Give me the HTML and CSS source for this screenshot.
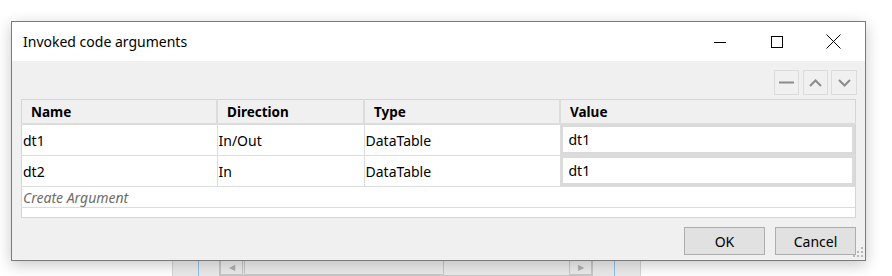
FILE: index.html
```html
<!DOCTYPE html>
<html lang="en">
<head>
    <meta charset="UTF-8">
    <title>Invoked code arguments</title>
    <link rel="stylesheet" href="styles.css">
</head>
<body>
    <!-- Designer panel behind the dialog -->
    <div class="backdrop">
        <div class="backdrop-scroll">
            <span class="arrow-box left">&#9664;</span>
            <span class="thumb"></span>
            <span class="arrow-box right">&#9654;</span>
        </div>
    </div>

    <!-- Dialog window -->
    <div class="dialog">
        <div class="title-bar">
            <span class="title">Invoked code arguments</span>
            <div class="window-buttons">
                <span class="win-btn">
                    <svg width="12" height="12" viewBox="0 0 12 12"><path d="M0 6.5h12" stroke="#000" stroke-width="1"/></svg>
                </span>
                <span class="win-btn">
                    <svg width="12" height="12" viewBox="0 0 12 12"><rect x="0.5" y="0.5" width="11" height="11" fill="none" stroke="#000" stroke-width="1"/></svg>
                </span>
                <span class="win-btn">
                    <svg width="15" height="15" viewBox="0 0 15 15"><path d="M0.5 0.5l14 14M14.5 0.5l-14 14" stroke="#000" stroke-width="1"/></svg>
                </span>
            </div>
        </div>

        <div class="content">
            <div class="toolbar">
                <span class="tool-btn">
                    <svg width="15" height="3" viewBox="0 0 15 3"><path d="M0 1.5h15" stroke="#8c8c8c" stroke-width="2"/></svg>
                </span>
                <span class="tool-btn">
                    <svg width="13" height="8" viewBox="0 0 13 8"><path d="M1 7l5.5-5.5L12 7" fill="none" stroke="#8c8c8c" stroke-width="2"/></svg>
                </span>
                <span class="tool-btn">
                    <svg width="13" height="8" viewBox="0 0 13 8"><path d="M1 1l5.5 5.5L12 1" fill="none" stroke="#8c8c8c" stroke-width="2"/></svg>
                </span>
            </div>

            <table class="args">
                <thead>
                    <tr>
                        <th class="col-name">Name</th>
                        <th class="col-dir">Direction</th>
                        <th class="col-type">Type</th>
                        <th>Value</th>
                    </tr>
                </thead>
                <tbody id="argRows"></tbody>
                <tfoot>
                    <tr class="create-row">
                        <td colspan="4">Create Argument</td>
                    </tr>
                    <tr class="empty-row">
                        <td colspan="4"></td>
                    </tr>
                </tfoot>
            </table>

            <div class="footer">
                <button class="btn">OK</button>
                <button class="btn">Cancel</button>
            </div>
        </div>

        <svg class="grip" width="10" height="10" viewBox="0 0 10 10">
            <rect x="8" y="0" width="2" height="2" fill="#b8b8b8"/>
            <rect x="4" y="4" width="2" height="2" fill="#b8b8b8"/>
            <rect x="8" y="4" width="2" height="2" fill="#b8b8b8"/>
            <rect x="0" y="8" width="2" height="2" fill="#b8b8b8"/>
            <rect x="4" y="8" width="2" height="2" fill="#b8b8b8"/>
            <rect x="8" y="8" width="2" height="2" fill="#b8b8b8"/>
        </svg>
    </div>

    <script>
        // Arguments passed to the invoked code
        const argsData = [
            { name: "dt1", direction: "In/Out", type: "DataTable", value: "dt1" },
            { name: "dt2", direction: "In", type: "DataTable", value: "dt1" }
        ];

        const argRows = document.getElementById('argRows');
        argsData.forEach(arg => {
            const row = document.createElement('tr');
            row.innerHTML = `
                <td>${arg.name}</td>
                <td>${arg.direction}</td>
                <td>${arg.type}</td>
                <td class="value-cell"><div class="value-box">${arg.value}</div></td>
            `;
            argRows.appendChild(row);
        });
    </script>
</body>
</html>
```

FILE: styles.css
```css
body {
    margin: 0;
    background: #fff;
    font-family: 'Noto Sans', 'Open Sans', sans-serif;
    font-size: 14px;
    color: #000;
    width: 892px;
    height: 276px;
    overflow: hidden;
    position: relative;
}

/* Panel of the designer seen under the dialog */
.backdrop {
    position: absolute;
    left: 172px;
    top: 250px;
    width: 467px;
    height: 30px;
    background: linear-gradient(#fafafa, #e6e6e6);
    border-left: 1px solid #d6d6d6;
    border-right: 1px solid #d6d6d6;
}

.backdrop::before,
.backdrop::after {
    content: "";
    position: absolute;
    top: 0;
    bottom: 0;
    width: 1px;
    background: #8fc1e8;
}

.backdrop::before {
    left: 25px;
}

.backdrop::after {
    left: 441px;
}

.backdrop-scroll {
    position: absolute;
    left: 46px;
    top: 0;
    width: 372px;
    height: 24px;
    border: 1px solid #c8c8c8;
    display: flex;
    font-size: 8px;
    color: #b0b0b0;
}

.arrow-box {
    width: 21px;
    border: 1px solid #c8c8c8;
    display: flex;
    align-items: flex-end;
    justify-content: center;
    padding-bottom: 2px;
}

.thumb {
    width: 198px;
    border: 1px solid #c8c8c8;
    margin-left: 1px;
}

.arrow-box.right {
    margin-left: auto;
}

/* Dialog */
.dialog {
    position: absolute;
    left: 11px;
    top: 21px;
    width: 853px;
    height: 238px;
    border: 1px solid #7a7a7a;
    background: #f0f0f0;
    box-shadow: 0 4px 14px rgba(0, 0, 0, 0.22);
}

.title-bar {
    height: 39px;
    background: #fff;
    display: flex;
    align-items: center;
}

.title {
    padding-left: 11px;
    font-size: 14px;
    color: #000;
}

.window-buttons {
    margin-left: auto;
    display: flex;
    margin-right: 3px;
}

.win-btn {
    width: 57px;
    height: 39px;
    display: flex;
    align-items: center;
    justify-content: center;
}

.content {
    padding: 9px 9px 0 9px;
}

.toolbar {
    display: flex;
    justify-content: flex-end;
    gap: 4px;
    margin-right: -1px;
    margin-bottom: 4px;
}

.tool-btn {
    width: 23px;
    height: 23px;
    border: 1px solid #dcdcdc;
    background: #f0f0f0;
    display: flex;
    align-items: center;
    justify-content: center;
}

.tool-btn:last-child {
    width: 24px;
    margin-left: -1px;
}

.args {
    width: 835px;
    border-collapse: collapse;
    table-layout: fixed;
    background: #fff;
    border: 1px solid #d5d5d5;
}

.args th {
    background: #f0f0f0;
    font-size: 13.5px;
    font-weight: 700;
    text-align: left;
    height: 23px;
    padding: 0 0 0 9px;
    border-left: 2px solid #dcdcdc;
    border-bottom: 2px solid #dcdcdc;
}

.args th:first-child {
    border-left: none;
}

.col-name {
    width: 185px;
}

.col-dir {
    width: 136px;
}

.col-type {
    width: 185px;
}

.args td {
    height: 30px;
    padding: 0 0 0 1px;
    border-left: 1px solid #dcdcdc;
    border-bottom: 1px solid #dcdcdc;
}

.args td:first-child {
    border-left: none;
}

.args td.value-cell {
    height: 25px;
    padding: 2px 3px 3px 2px;
    background: #dadada;
}

.value-box {
    background: #fff;
    height: 25px;
    line-height: 25px;
    padding-left: 6px;
}

.create-row td {
    height: 20px;
    font-style: italic;
    color: #6d6d6d;
    border-left: none;
}

.empty-row td {
    height: 9px;
    border-left: none;
    border-bottom: none;
    padding: 0;
}

.footer {
    display: flex;
    justify-content: flex-end;
    gap: 10px;
    margin-top: 9px;
}

.btn {
    width: 81px;
    height: 28px;
    background: #e1e1e1;
    border: 1px solid #adadad;
    font-family: inherit;
    font-size: 14px;
    color: #000;
    padding: 0;
}

.grip {
    position: absolute;
    right: 2px;
    bottom: 3px;
}
```
